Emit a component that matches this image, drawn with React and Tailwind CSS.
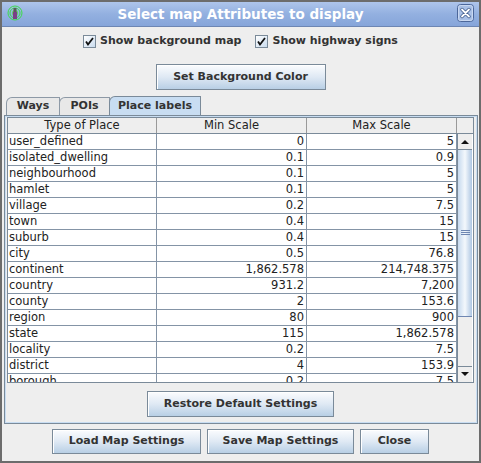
import React from "react";

const rows = [
  ["user_defined", "0", "5"],
  ["isolated_dwelling", "0.1", "0.9"],
  ["neighbourhood", "0.1", "5"],
  ["hamlet", "0.1", "5"],
  ["village", "0.2", "7.5"],
  ["town", "0.4", "15"],
  ["suburb", "0.4", "15"],
  ["city", "0.5", "76.8"],
  ["continent", "1,862.578", "214,748.375"],
  ["country", "931.2", "7,200"],
  ["county", "2", "153.6"],
  ["region", "80", "900"],
  ["state", "115", "1,862.578"],
  ["locality", "0.2", "7.5"],
  ["district", "4", "153.9"],
  ["borough", "0.2", "7.5"],
];

const Button = ({ className, children }) => (
  <div
    className={`flex items-center justify-center border border-[#7a8a99] bg-gradient-to-b from-[#fbfcfe] via-[#dfe9f4] to-[#b8cfe5] shadow-[inset_1px_1px_0_#ffffff] text-[11px] font-bold text-[#333333] ${className}`}
  >
    {children}
  </div>
);

const CheckBox = ({ label }) => (
  <div className="flex items-center gap-[4px]">
    <div className="w-[13px] h-[13px] border border-[#7a8a99] bg-gradient-to-br from-[#ffffff] to-[#c9dbee] flex items-center justify-center">
      <svg width="9" height="9" viewBox="0 0 9 9">
        <path d="M1 4.5 L3 7.5 L8 1" fill="none" stroke="#111" strokeWidth="1.8" />
      </svg>
    </div>
    <span className="text-[11px] font-bold text-[#333333]">{label}</span>
  </div>
);

const Tab = ({ label, active, className }) => (
  <div
    className={`flex items-center justify-center rounded-tl-[6px] border border-b-0 text-[11px] font-bold text-[#333333] ${
      active
        ? "h-[19px] bg-[#c8ddf2] border-[#7a8a99] z-10"
        : "h-[18px] bg-[#e8e8e8] border-[#8d99a6]"
    } ${className}`}
  >
    {label}
  </div>
);

const ScrollBar = () => (
  <div className="w-[15px] flex flex-col bg-[#eeeeee] border-l border-[#7a8a99]">
    <div className="h-[16px] flex items-center justify-center border-b border-[#7a8a99] bg-[#eeeeee]">
      <svg width="8" height="5" viewBox="0 0 8 5">
        <path d="M0 5 L4 1 L8 5 Z" fill="#111" />
      </svg>
    </div>
    <div className="h-[167px] border-b border-[#6f87b2] bg-gradient-to-r from-[#c6d9ee] via-[#f4f8fc] to-[#aec6e2] flex items-center justify-center">
      <svg width="9" height="6" viewBox="0 0 9 6">
        <path d="M0 0.5 H9 M0 2.5 H9 M0 4.5 H9" stroke="#6f87b2" strokeWidth="1" />
      </svg>
    </div>
    <div className="flex-1" />
    <div className="h-[16px] flex items-center justify-center border-t border-[#7a8a99] bg-[#eeeeee]">
      <svg width="8" height="5" viewBox="0 0 8 5">
        <path d="M0 0 L4 4 L8 0 Z" fill="#111" />
      </svg>
    </div>
  </div>
);

export default function App() {
  return (
    <div className="w-[481px] h-[463px] flex flex-col bg-[#eeeeee] border-2 border-[#6c6c6c] font-['DejaVu_Sans',sans-serif] overflow-hidden">
      {/* title bar */}
      <div className="h-[25px] shrink-0 relative flex items-center justify-center border-b border-[#6d86b3] bg-gradient-to-b from-[#aec5eb] via-[#93b0e0] to-[#86a5da]">
        <svg className="absolute left-[5px] top-[3px]" width="16" height="16" viewBox="0 0 16 16">
          <circle cx="8" cy="8" r="7" fill="none" stroke="#3ddc4a" strokeWidth="1" />
          <circle cx="8" cy="8" r="5" fill="none" stroke="#3ddc4a" strokeWidth="1" />
          <circle cx="8" cy="8" r="3" fill="#5fd060" />
          <rect x="6" y="7" width="4" height="7" fill="#7a3f86" />
          <rect x="6.5" y="3" width="3" height="4" fill="#5a5a5a" />
        </svg>
        <span className="text-[13.5px] font-bold text-white">Select map Attributes to display</span>
        <svg className="absolute right-[5px] top-[2px]" width="17" height="18" viewBox="0 0 17 18">
          <rect x="0.5" y="0.5" width="16" height="17" rx="3" fill="#a9c0e6" stroke="#4c679a" />
          <rect x="1.5" y="1.5" width="14" height="15" rx="2" fill="none" stroke="#c9d8f1" />
          <path d="M5 5.5 L12 12.5 M12 5.5 L5 12.5" stroke="#3e5a8c" strokeWidth="3.4" strokeLinecap="round" />
          <path d="M5 5.5 L12 12.5 M12 5.5 L5 12.5" stroke="#ffffff" strokeWidth="1.8" strokeLinecap="round" />
        </svg>
      </div>

      {/* options */}
      <div className="mt-[5px] h-[18px] flex items-center justify-center gap-[14px]">
        <CheckBox label="Show background map" />
        <CheckBox label="Show highway signs" />
      </div>

      <div className="mt-[14px] flex justify-center">
        <Button className="w-[170px] h-[26px]">Set Background Color</Button>
      </div>

      {/* tabs */}
      <div className="mt-[6px] ml-[2px] mr-[1px] flex flex-col">
        <div className="flex items-end pl-[2px] h-[19px]">
          <Tab label="Ways" className="w-[54px]" />
          <Tab label="POIs" className="w-[51px] -ml-px" />
          <Tab label="Place labels" active className="w-[92px] -ml-px" />
        </div>
        <div className="h-[309px] border border-[#7a8a99]">
          <div className="h-full border border-[#c8ddf2] pl-[1px] pr-[2px] pb-[4px] flex flex-col">
            <div className="h-[266px] border border-[#7a8a99] bg-white flex flex-col text-[11.5px] text-[#222222]">
              {/* header */}
              <div className="h-[16px] flex bg-[#eeeeee] border-b border-[#7a8a99]">
                <div className="w-[149px] border-r border-[#999999] flex items-center justify-center">Type of Place</div>
                <div className="w-[150px] border-r border-[#999999] flex items-center justify-center">Min Scale</div>
                <div className="w-[150px] border-r border-[#999999] flex items-center justify-center">Max Scale</div>
                <div className="flex-1" />
              </div>
              <div className="flex-1 flex overflow-hidden">
                <div className="w-[449px] overflow-hidden">
                  {rows.map((r) => (
                    <div key={r[0]} className="h-[16px] flex border-b border-[#8494a6] leading-[15px]">
                      <div className="w-[149px] border-r border-[#8494a6] pl-[1px] whitespace-nowrap">{r[0]}</div>
                      <div className="w-[150px] border-r border-[#8494a6] pr-[2px] text-right">{r[1]}</div>
                      <div className="w-[150px] border-r border-[#8494a6] pr-[2px] text-right">{r[2]}</div>
                    </div>
                  ))}
                </div>
                <ScrollBar />
              </div>
            </div>
            <div className="mt-[8px] flex justify-center">
              <Button className="w-[187px] h-[26px]">Restore Default Settings</Button>
            </div>
          </div>
        </div>
      </div>

      {/* dialog buttons */}
      <div className="mt-[5px] flex justify-center gap-[6px]">
        <Button className="w-[149px] h-[25px]">Load Map Settings</Button>
        <Button className="w-[147px] h-[25px]">Save Map Settings</Button>
        <Button className="w-[69px] h-[25px]">Close</Button>
      </div>
    </div>
  );
}
